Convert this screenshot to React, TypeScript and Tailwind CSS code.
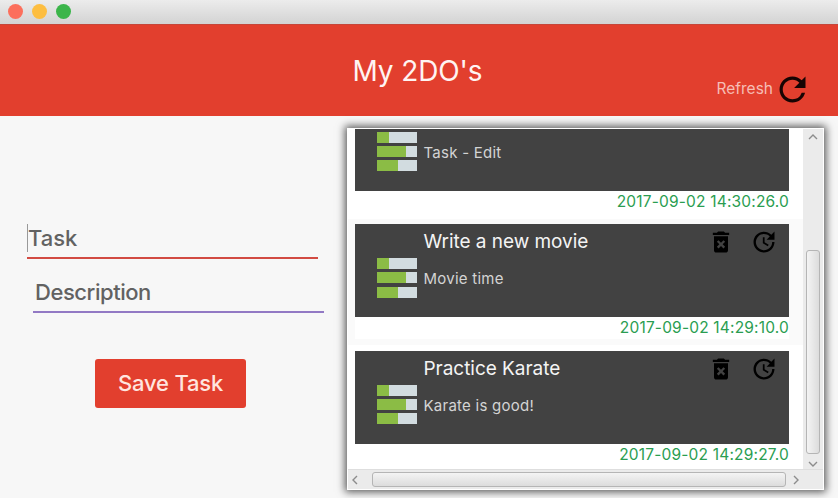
import type { ReactNode } from "react";

type Task = { title?: string; description: string; date: string };

const TASKS: Task[] = [
  { description: "Task - Edit", date: "2017-09-02 14:30:26.0" },
  { title: "Write a new movie", description: "Movie time", date: "2017-09-02 14:29:10.0" },
  { title: "Practice Karate", description: "Karate is good!", date: "2017-09-02 14:29:27.0" },
];

function Icon({ className, d }: { className: string; d: string }) {
  return (
    <svg viewBox="0 0 24 24" className={className} fill="currentColor">
      <path d={d} />
    </svg>
  );
}

const REFRESH =
  "M17.65 6.35A7.958 7.958 0 0 0 12 4c-4.42 0-7.99 3.58-7.99 8s3.57 8 7.99 8c3.73 0 6.84-2.55 7.73-6h-2.08A5.99 5.99 0 0 1 12 18c-3.31 0-6-2.69-6-6s2.69-6 6-6c1.66 0 3.14.69 4.22 1.78L13 11h7V4l-2.35 2.35z";
const DELETE =
  "M6 19c0 1.1.9 2 2 2h8c1.1 0 2-.9 2-2V7H6v12zm2.46-7.12l1.41-1.41L12 12.59l2.12-2.12 1.41 1.41L13.41 14l2.12 2.12-1.41 1.41L12 15.41l-2.12 2.12-1.41-1.41L10.59 14l-2.13-2.12zM15.5 4l-1-1h-5l-1 1H5v2h14V4z";
const UPDATE =
  "M21 10.12h-6.78l2.74-2.82c-2.73-2.7-7.15-2.8-9.88-.1-2.73 2.71-2.73 7.08 0 9.79s7.15 2.71 9.88 0C18.32 15.65 19 14.08 19 12.1h2c0 1.98-.88 4.55-2.64 6.29-3.51 3.48-9.21 3.48-12.72 0-3.5-3.47-3.53-9.11-.02-12.58s9.14-3.47 12.65 0L21 3v7.12zM12.5 8v4.25l3.5 2.08-.72 1.21L11 13V8h1.5z";

function Bar({ children }: { children: ReactNode }) {
  return <div className="flex h-[11px] w-10 bg-[#d2dce0]">{children}</div>;
}

function ProgressBars() {
  return (
    <div className="flex w-10 flex-col gap-[3.3px]">
      <Bar><div className="w-[11.5px] bg-[#8bbc45]" /></Bar>
      <Bar><div className="w-[28.5px] bg-[#8bbc45]" /></Bar>
      <Bar><div className="w-[21px] bg-[#8bbc45]" /></Bar>
    </div>
  );
}

function TaskCell({ task, shaded }: { task: Task; shaded: boolean }) {
  return (
    <div className={`flex h-[126.5px] shrink-0 flex-col pt-[5.5px] pr-[14px] pl-[6.5px] ${shaded ? "bg-[#fafafa]" : "bg-white"}`}>
      <div className="flex h-[93px] shrink-0 bg-[#424242] pl-[22.5px]">
        <div className="pt-[34px]"><ProgressBars /></div>
        <div className="flex flex-1 flex-col pl-[6.5px] whitespace-nowrap">
          <div className="h-9 text-[19px] leading-9 tracking-[-0.04px] text-[#f4f4f4]">{task.title}</div>
          <div className="h-9 text-[15px] leading-[37px] tracking-[0.25px] text-[#d4d4d4]">{task.description}</div>
        </div>
        <div className="flex gap-[15px] pt-1 pr-[11px] text-black">
          <Icon className="size-7" d={DELETE} />
          <Icon className="size-7" d={UPDATE} />
        </div>
      </div>
      <div className="bg-white text-right text-[15.5px] leading-[22px] tracking-[0.18px] text-[#2a9d51]">{task.date}</div>
    </div>
  );
}

function Chevron({ d }: { d: string }) {
  return (
    <svg viewBox="0 0 10 10" className="size-[10px]" fill="none" stroke="#8c8c8c" strokeWidth="1.4">
      <path d={d} />
    </svg>
  );
}

export default function App() {
  return (
    <div className="flex h-[498px] w-[838px] flex-col overflow-hidden bg-[#f7f7f7] font-[Inter,sans-serif]">
      <div className="flex h-6 shrink-0 items-start gap-[9px] bg-linear-to-b from-[#ececec] to-[#d3d3d3] pt-1 pl-2">
        <div className="size-[15px] rounded-full bg-[#fc6f5c]" />
        <div className="size-[15px] rounded-full bg-[#fdbe41]" />
        <div className="size-[15px] rounded-full bg-[#3bb54a]" />
      </div>
      <header className="grid h-[92px] shrink-0 grid-cols-3 border-t border-[#c5463a] bg-[#e23f2e]">
        <div />
        <h1 className="pt-[28px] pr-[3px] text-center text-[28px] leading-9 tracking-[-0.1px] text-[#fff4f2]">My 2DO's</h1>
        <div className="flex items-center justify-end pt-[38px] pr-[26px]">
          <span className="pb-px text-[15.5px] text-[#f6bdb5]">Refresh</span>
          <Icon className="size-[39px] text-[#170403]" d={REFRESH} />
        </div>
      </header>
      <main className="flex min-h-0 flex-1">
        <section className="w-[347px] shrink-0 pt-[105px] text-[22px] font-medium text-[#626262]">
          <div className="ml-[27px] flex h-[38px] w-[291px] border-b-2 border-[#d24b42]">
            <div className="mt-[3px] h-[28px] w-px bg-[#999]" />
            <span className="leading-[35px]">Task</span>
          </div>
          <div className="mt-[16px] ml-[33px] h-[38px] w-[291px] border-b-2 border-[#9279c4] pl-[2px] leading-[35px] tracking-[-0.45px]">Description</div>
          <button className="mt-[46px] ml-[95px] block h-[49px] w-[151px] rounded-[3px] bg-[#e23f2e] text-[22px] font-medium tracking-[-0.2px] text-[#ffe5df]">Save Task</button>
        </section>
        <section className="mt-3 flex h-[362px] w-[477px] shrink-0 flex-col border border-white bg-white shadow-[0_0_8px_2px_rgba(0,0,0,0.65)]">
          <div className="flex min-h-0 flex-1">
            <div className="flex w-[455px] flex-col justify-end overflow-hidden">
              <div className="-mb-[2.5px] flex shrink-0 flex-col">
                {TASKS.map((task, i) => (
                  <TaskCell key={task.date} task={task} shaded={i === 1} />
                ))}
              </div>
            </div>
            <div className="flex w-5 flex-col items-center bg-[#ebebeb] pt-[3px]">
              <Chevron d="M1 7l4-4 4 4" />
              <div className="mt-[108px] h-[204px] w-[14px] rounded-[3px] border border-[#b5b5b5] bg-linear-to-r from-[#f4f4f4] to-[#dcdcdc]" />
              <div className="mt-[5px]"><Chevron d="M1 3l4 4 4-4" /></div>
            </div>
          </div>
          <div className="flex h-5 shrink-0 items-center border-t border-[#dedede] bg-[#ebebeb] pl-[2px]">
            <Chevron d="M7 1L3 5l4 4" />
            <div className="ml-3 h-[15px] w-[414px] rounded-[3px] border border-[#b5b5b5] bg-linear-to-b from-[#f4f4f4] to-[#dcdcdc]" />
            <div className="ml-[5px]"><Chevron d="M3 1l4 4-4 4" /></div>
          </div>
        </section>
      </main>
    </div>
  );
}
